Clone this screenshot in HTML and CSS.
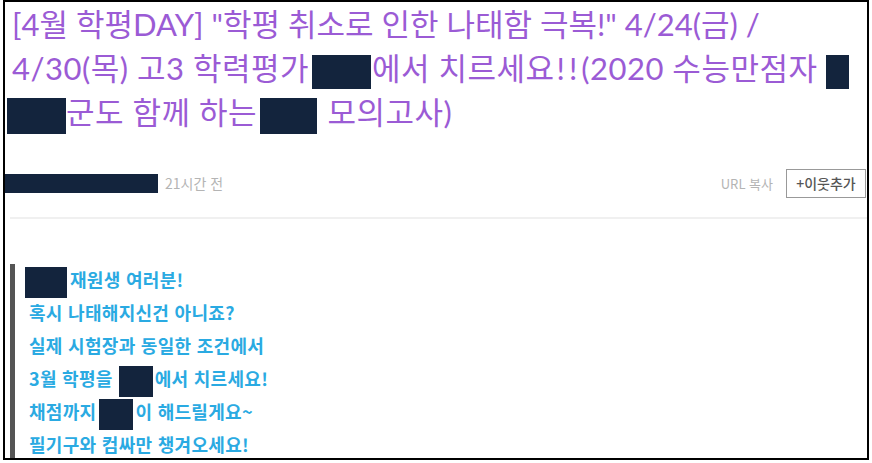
FILE: index.html
```html
<!DOCTYPE html>
<html lang="ko">
<head>
<meta charset="utf-8">
<link rel="stylesheet" href="styles.css">
</head>
<body>
<div class="frame">
  <h1 class="title">[4월 학평DAY] "학평 취소로 인한 나태함 극복!" 4/24(금) /<br><span class="wide">4/30(목) 고3 학력평가</span><span class="redact r-title"></span><span class="wide">에서 치르세요<span class="bang">!!</span>(2020 수능만점자 </span><span class="redact r-small"></span><br><span class="redact r-lead"></span><span class="wide">군도 함께 하는</span><span class="redact r-title2"></span><span class="wide"> 모의고사)</span></h1>
  <div class="meta">
    <div class="author">
      <span class="redact r-name"></span>
      <span class="time">21시간 전</span>
    </div>
    <div class="actions">
      <span class="url">URL 복사</span>
      <span class="follow">+이웃추가</span>
    </div>
  </div>
  <div class="divider"></div>
  <blockquote class="quote">
    <p><span class="redact r-q1"></span>재원생 여러분!</p>
    <p>혹시 나태해지신건 아니죠?</p>
    <p>실제 시험장과 동일한 조건에서</p>
    <p>3월 학평을<span class="redact r-q2"></span>에서 치르세요!</p>
    <p>채점까지<span class="redact r-q3"></span>이 해드릴게요~</p>
    <p>필기구와 컴싸만 챙겨오세요!</p>
  </blockquote>
</div>
</body>
</html>
```
FILE: styles.css
```css
* { box-sizing: border-box; }
html, body { margin: 0; padding: 0; background: #fff; }
body { font-family: "Noto Sans CJK KR", "Noto Sans", sans-serif; }
.frame {
  width: 866px;
  height: 460px;
  margin-left: 3px;
  border: 2px solid #000;
  overflow: hidden;
  background: #fff;
}
.redact { display: inline-block; background: #13243d; vertical-align: middle; }
.title {
  margin: 0;
  padding: 0 0 0 7px;
  font-family: "Lato", "Noto Sans CJK KR", sans-serif;
  font-size: 31px;
  font-weight: 400;
  line-height: 44px;
  color: #9b5bd5;
  white-space: nowrap;
}
.wide { letter-spacing: 0.5px; }
.bang { letter-spacing: 4px; margin-left: 2px; }
.r-title { width: 59px; height: 34px; margin: 0 1px 0 3px; }
.r-small { width: 23px; height: 34px; }
.r-lead { width: 59px; height: 36px; margin-left: -5px; }
.r-title2 { width: 57px; height: 36px; margin: 0 2px 0 3px; }
.meta {
  display: flex;
  justify-content: space-between;
  align-items: center;
  margin-top: 34px;
  height: 30px;
  padding-right: 1px;
}
.author { display: flex; align-items: center; gap: 7px; }
.r-name { width: 153px; height: 19px; }
.time { font-size: 14px; color: #b4b4b4; }
.actions { display: flex; align-items: center; gap: 13px; }
.url { font-size: 13px; color: #b4b4b4; }
.follow {
  display: inline-flex;
  align-items: center;
  justify-content: center;
  width: 80px;
  height: 29px;
  border: 1px solid #999;
  font-size: 14px;
  font-weight: 500;
  color: #555;
}
.divider { height: 2px; background: #f0f0f0; margin: 19px 0 0 5px; }
.quote {
  margin: 45px 0 0 5px;
  padding: 0 0 0 14px;
  border-left: 5px solid #555;
  color: #2aaae2;
  font-weight: 700;
  font-size: 18px;
}
.quote p { margin: 0; height: 33px; line-height: 31px; white-space: nowrap; letter-spacing: 0.3px; }
.r-q1 { width: 42px; height: 31px; margin: 0 3px 0 -4px; }
.r-q2 { width: 34px; height: 31px; margin: 0 2px 0 6px; }
.r-q3 { width: 34px; height: 31px; margin: 0 2px 0 3px; }
```
